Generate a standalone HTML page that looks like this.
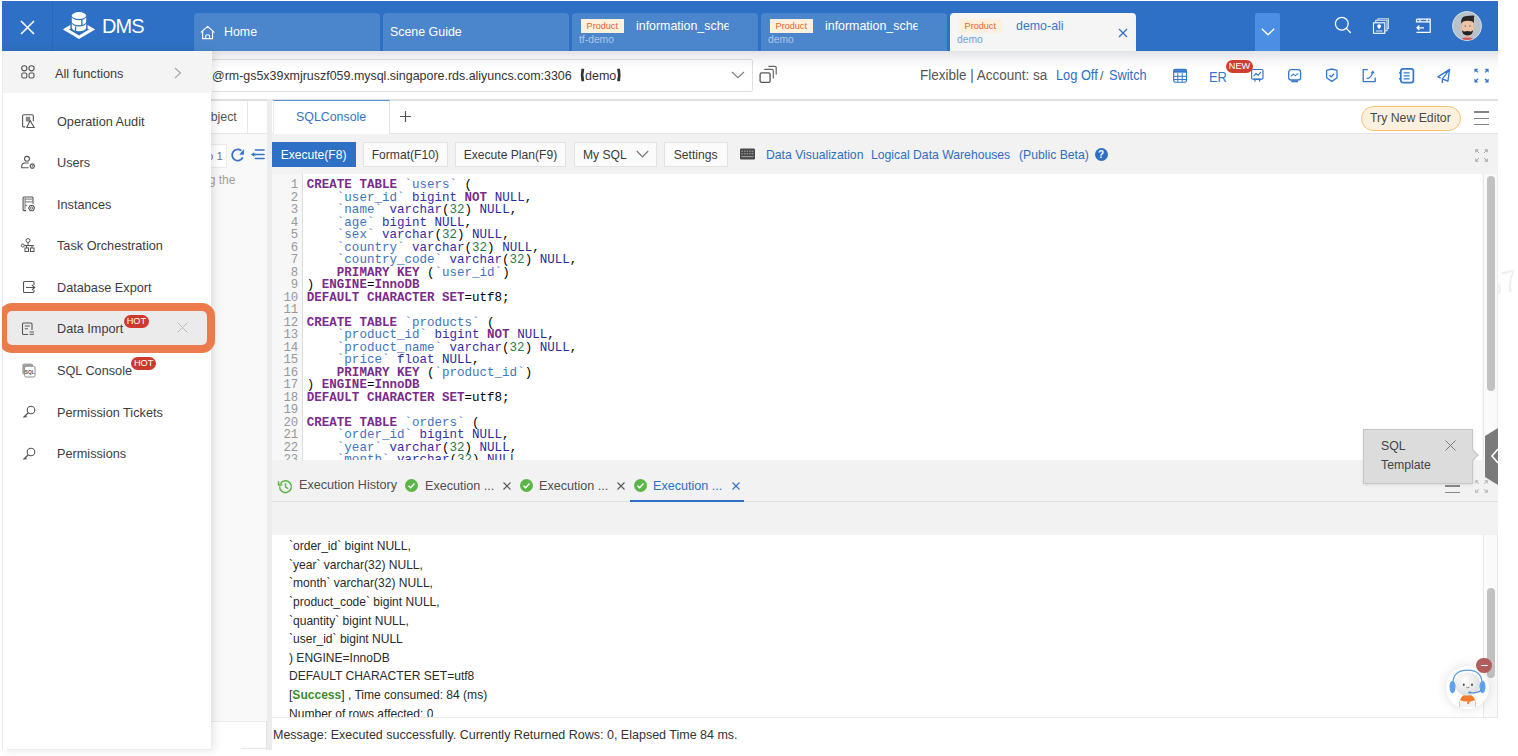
<!DOCTYPE html>
<html><head><meta charset="utf-8">
<style>
*{box-sizing:border-box;margin:0;padding:0}
html,body{width:1518px;height:756px;overflow:hidden;background:#fff;font-family:"Liberation Sans",sans-serif;color:#333;position:relative}
.a{position:absolute}
.t{position:absolute;white-space:nowrap;line-height:1}
svg{position:absolute;overflow:visible}
/* header */
#hdr{position:absolute;left:2px;top:1px;width:1496px;height:50px;background:#2e70c5}
.htab{position:absolute;top:12px;height:38px;width:186px;background:#4b86cd;border-radius:4px 4px 0 0;overflow:hidden}
.badge{position:absolute;top:5.5px;height:14.7px;width:42.5px;background:#fdf0dc;color:#e8652e;font-size:9.1px;line-height:14.7px;text-align:center}
.htitle{position:absolute;top:8px;font-size:13.4px;color:#fff;line-height:15px;white-space:nowrap;margin-top:-1.1px;transform:scaleX(.926);transform-origin:0 0}
.hsub{position:absolute;top:22px;font-size:10.3px;color:rgba(255,255,255,.55);line-height:1}
/* connection bar */
#conn{position:absolute;left:2px;top:51px;width:1496px;height:49px;background:#fff}
#conn .shadow{display:none}
.ci{position:absolute;top:68px;width:16px;height:16px}
/* main */
#main{position:absolute;left:2px;top:100.5px;width:1496px;height:649.5px;background:#f9f9f9}
.btn{position:absolute;top:142px;height:25px;background:#fbfbfb;border:1px solid #e2e2e2;font-size:13.07px;color:#3a3a3a;line-height:24px;text-align:center;border-radius:0}
/* code */
.code{position:absolute;left:306.8px;top:179.3px;font-family:"Liberation Mono",monospace;font-size:12.53px;line-height:12.5px;white-space:pre;color:#000}
.ln{position:absolute;left:272px;width:26.3px;top:179.3px;font-family:"Liberation Mono",monospace;font-size:12.4px;line-height:12.5px;white-space:pre;color:#999;text-align:right}
.k{color:#7a2b8c;font-weight:bold}
.v{color:#3f74bd}
.b{color:#3a2ea6}
.n{color:#28299c}
.num{color:#2b7a4b}
/* sidebar */
#side{position:absolute;left:2px;top:50.5px;width:209px;height:699.5px;background:#fff;box-shadow:3px 0 9px rgba(0,0,0,.11)}
.mi{position:absolute;left:0;width:209px;height:41px}
.mi .lbl{position:absolute;left:55.5px;top:14px;font-size:12.4px;color:#333;line-height:1;white-space:nowrap}
.hot{position:absolute;height:13px;width:25.3px;background:#cd3a2c;border-radius:6.5px;color:#fff;font-size:9.2px;line-height:13px;text-align:center}
/* results */
.res{position:absolute;left:289px;margin-top:0.2px;font-size:13.1px;color:#2a2a2a;line-height:1;white-space:nowrap;transform:scaleX(.92);transform-origin:0 0}
</style></head><body>

<!-- HEADER -->
<div id="hdr">
  <div class="a" style="left:50px;top:0;width:1px;height:50px;background:#2a67bb"></div>
  <!-- close X -->
  <svg style="left:18px;top:18.5px" width="15" height="15" viewBox="0 0 15 15"><path d="M1 1L14 14M14 1L1 14" stroke="#fff" stroke-width="1.6"/></svg>
  <!-- logo -->
  <svg style="left:59px;top:10px" width="36" height="30" viewBox="0 0 36 30">
    <path d="M4.9 18.4L18 10.6L31.1 18.4L18 26.2Z" fill="none" stroke="#fff" stroke-width="3"/>
    <path d="M9.4 4.6V16.8A8.6 4.8 0 0 0 26.6 16.8V4.6Z" fill="#2e70c5"/>
    <ellipse cx="18" cy="4.6" rx="7.2" ry="3.5" fill="#fff"/>
    <path d="M10.8 5.8A7.2 3.5 0 0 0 25.2 5.8V10.8A7.2 3.5 0 0 1 10.8 10.8Z" fill="#fff"/>
    <path d="M10.8 12A7.2 3.5 0 0 0 25.2 12V16.8A7.2 3.5 0 0 1 10.8 16.8Z" fill="#fff"/>
    <path d="M20.9 9V14.5M14.6 15.5V21" stroke="#2e70c5" stroke-width="1.3"/>
  </svg>
  <div class="t" style="left:100px;top:14.8px;font-size:20px;letter-spacing:-0.9px;color:#fff">DMS</div>

  <!-- tabs -->
  <div class="htab" style="left:192px">
    <svg style="left:6px;top:12px" width="16" height="16" viewBox="0 0 16 16"><path d="M1.2 7.2L7.6 1.4L14 7.2M2.6 6V13.6H12.6V6M5.6 13.6V11Q5.6 9.8 7.6 9.8Q9.6 9.8 9.6 11V13.6" fill="none" stroke="#fff" stroke-width="1.1" stroke-linejoin="round" stroke-linecap="round"/></svg>
    <div class="htitle" style="left:29.5px;top:12px">Home</div>
  </div>
  <div class="htab" style="left:381px">
    <div class="htitle" style="left:6.5px;top:12px">Scene Guide</div>
  </div>
  <div class="htab" style="left:570px">
    <div class="badge" style="left:9px">Product</div>
    <div class="htitle" style="left:64px;top:6px;width:100.4px;overflow:hidden">information_schema</div>
    <div class="hsub" style="left:7px">tf-demo</div>
  </div>
  <div class="htab" style="left:759px">
    <div class="badge" style="left:9px">Product</div>
    <div class="htitle" style="left:64px;top:6px;width:100.4px;overflow:hidden">information_schema</div>
    <div class="hsub" style="left:7px">demo</div>
  </div>
  <div class="htab" style="left:948px;background:#f5f5f5">
    <div class="badge" style="left:9px">Product</div>
    <div class="htitle" style="left:65.5px;top:6px;color:#3a78c9">demo-ali</div>
    <div class="hsub" style="left:7px;color:#6b9fd9">demo</div>
    <svg style="left:168px;top:14.7px" width="10" height="10" viewBox="0 0 10 10"><path d="M1 1L9 9M9 1L1 9" stroke="#2e6fc4" stroke-width="1.2"/></svg>
  </div>
  <div class="a" style="left:1253px;top:12px;width:25px;height:38.5px;background:#4a8fe3;border-radius:2px 2px 0 0">
    <svg style="left:5.5px;top:14.5px" width="14" height="8" viewBox="0 0 14 8"><path d="M0.8 0.8L7 6.8L13.2 0.8" fill="none" stroke="#fff" stroke-width="1.4"/></svg>
  </div>
  <!-- right icons -->
  <svg style="left:1331px;top:14px" width="20" height="20" viewBox="0 0 20 20"><circle cx="8.8" cy="8.8" r="6.4" fill="none" stroke="#fff" stroke-width="1.3"/><path d="M13.3 13.3L17.4 17.4" stroke="#fff" stroke-width="1.4" stroke-linecap="round"/></svg>
  <svg style="left:1369px;top:15px" width="20" height="20" viewBox="0 0 20 20">
    <path d="M7 4.3V2.8H17.5V12.5H16" fill="none" stroke="rgba(255,255,255,.75)" stroke-width="1.1"/>
    <path d="M4.8 6.8V4.3H16V14.8H13.8" fill="none" stroke="rgba(255,255,255,.85)" stroke-width="1.1"/>
    <rect x="2.5" y="6.8" width="11.3" height="10.5" fill="none" stroke="#fff" stroke-width="1.1"/>
    <path d="M8.1 13.2L6.5 11.2A1.9 1.9 0 1 1 9.7 11.2Z" fill="#fff"/>
    <path d="M4.8 15H11.4" stroke="rgba(255,255,255,.8)" stroke-width="1.1"/>
  </svg>
  <svg style="left:1412px;top:15px" width="20" height="20" viewBox="0 0 20 20">
    <path d="M2.5 3.2H16.2V16.3H2.5M2.5 3.2V6.5M2.5 5.8H16.2M6 3.2V5.8M13 3.2V5.8" fill="none" stroke="#fff" stroke-width="1.2"/>
    <path d="M3 11.8H10M5.4 9.6L3 11.8L5.4 14" fill="none" stroke="#fff" stroke-width="1.3"/>
  </svg>
  <!-- avatar -->
  <div class="a" style="left:1449.5px;top:10px;width:30px;height:30px;border-radius:50%;background:#b8c2ca;border:1.4px solid #d3dde6;overflow:hidden">
    <svg style="left:-2.8px;top:-1.4px" width="30" height="30" viewBox="0 0 30 30">
      <path d="M10.5 30Q11.5 26.3 17.5 26.3Q23.5 26.3 24.5 30Z" fill="#d9545a"/>
      <rect x="15.4" y="21" width="4.2" height="5.6" fill="#e3b596"/>
      <ellipse cx="11.3" cy="16.4" rx="1.1" ry="1.4" fill="#e8b898"/>
      <ellipse cx="23.7" cy="16.4" rx="1.1" ry="1.4" fill="#e8b898"/>
      <path d="M11.6 11Q11.6 8.8 13.6 8.8H21.4Q23.4 8.8 23.4 11V18Q23.4 22.4 17.5 22.8Q11.6 22.4 11.6 18Z" fill="#eec3a3"/>
      <path d="M11.2 12.8Q10.6 6.2 15 5.3Q19 4.6 23.2 4.4Q25 4.6 23.9 6.6Q24.2 9.2 23.7 12.2Q22.6 9.6 17.2 9.8Q12.6 10 11.2 12.8Z" fill="#262626"/>
      <ellipse cx="15.3" cy="15" rx=".8" ry="1" fill="#9b8373"/>
      <ellipse cx="19.9" cy="15" rx=".8" ry="1" fill="#9b8373"/>
      <path d="M11.9 19Q12 24.3 17.5 24.4Q23 24.3 23.1 19Q22.2 20.6 20.6 20.4Q17.5 19.6 14.4 20.4Q12.8 20.6 11.9 19Z" fill="#222"/>
    </svg>
  </div>
</div>

<!-- CONNECTION BAR -->
<div id="conn"><div class="shadow"></div>
  <div class="a" style="left:0;top:48px;width:1496px;height:2px;background:#dfdfdf"></div>
</div>
<div class="a" style="left:150px;top:59px;width:603px;height:33px;border:1px solid #e0e0e0;border-radius:2px;background:#fff"></div>
<div class="t" style="left:212px;top:68.7px;font-size:13.1px;color:#333;transform:scaleX(.95);transform-origin:0 0">@rm-gs5x39xmjruszf059.mysql.singapore.rds.aliyuncs.com:3306</div>
<svg style="left:579px;top:67px" width="8" height="16" viewBox="0 0 8 16"><path d="M5.2 1.7H2.4Q1.2 8 2.4 14.3H5.2V13.6Q3.6 8 5.2 2.4Z" fill="#333"/></svg>
<div class="t" style="left:585px;top:68.7px;font-size:13.1px;color:#333;transform:scaleX(.955);transform-origin:0 0">demo</div>
<svg style="left:615px;top:67px" width="8" height="16" viewBox="0 0 8 16"><path d="M2.2 1.7H5Q6.2 8 5 14.3H2.2V13.6Q3.8 8 2.2 2.4Z" fill="#333"/></svg>
<svg style="left:730.5px;top:71px" width="14" height="8" viewBox="0 0 14 8"><path d="M1 1L7 6.6L13 1" fill="none" stroke="#808080" stroke-width="1.2"/></svg>
<svg style="left:759px;top:66px" width="19" height="18" viewBox="0 0 19 18"><rect x="1.1" y="6.9" width="10" height="9.4" rx="1.6" fill="none" stroke="#555" stroke-width="1.3"/><path d="M5.2 3.4H13Q14.3 3.4 14.3 4.7V12.5" fill="none" stroke="#666" stroke-width="1.2"/><path d="M9.4 0.4H16Q17.2 0.4 17.2 1.6V8.4" fill="none" stroke="#666" stroke-width="1.2"/></svg>
<div class="t" style="left:919.5px;top:67.59px;font-size:14.58px;color:#555;transform:scaleX(.926);transform-origin:0 0">Flexible | Account: sa</div>
<div class="t" style="left:1056px;top:68.63px;font-size:13.82px;color:#2e6fc4;transform:scaleX(.926);transform-origin:0 0">Log Off</div>
<div class="t" style="left:1100px;top:68.7px;font-size:13.4px;color:#555;transform:scaleX(.926);transform-origin:0 0">/</div>
<div class="t" style="left:1109px;top:68.63px;font-size:13.82px;color:#2e6fc4;transform:scaleX(.926);transform-origin:0 0">Switch</div>
<div class="a" style="left:2px;top:51px;width:1496px;height:18px;background:linear-gradient(rgba(30,40,70,.13),rgba(30,40,70,.04) 55%,rgba(30,40,70,0))"></div>
<!-- toolbar icons -->
<svg style="left:1171px;top:67px" width="18" height="17" viewBox="0 0 18 17"><rect x="2.7" y="2.3" width="12.8" height="12.9" rx="1.6" fill="none" stroke="#3477cc" stroke-width="1.15"/><path d="M2.7 4.4H15.5" stroke="#3477cc" stroke-width="2.6"/><path d="M2.7 9.3H15.5M2.7 12.5H15.5M6.8 6V15M11.2 6V15" stroke="#3477cc" stroke-width="1"/></svg>
<div class="t" style="left:1209px;top:68.5px;font-size:15px;color:#3477cc;transform:scaleX(.86);transform-origin:0 0">ER</div>
<div class="a" style="left:1226px;top:59.7px;width:27px;height:13.2px;background:#cf3f31;border-radius:7px;color:#fff;font-size:9.2px;line-height:13.2px;text-align:center">NEW</div>
<svg style="left:1249px;top:67px" width="16" height="17" viewBox="0 0 16 17"><rect x="2.6" y="2.5" width="11.4" height="9.6" rx="1.2" fill="none" stroke="#3477cc" stroke-width="1.2"/><path d="M4.6 9.2L7 6.6L9.2 8.2L11.8 5.2" fill="none" stroke="#3477cc" stroke-width="1.1"/><path d="M6.3 12.2L5.8 14.6M10.3 12.2L10.8 14.6M4.8 12.4H11.8" fill="none" stroke="#3477cc" stroke-width="1.2"/></svg>
<svg style="left:1286px;top:67px" width="17" height="17" viewBox="0 0 17 17"><rect x="2.7" y="2.6" width="11.9" height="10.4" rx="2.6" fill="none" stroke="#3477cc" stroke-width="1.3"/><path d="M4.9 9.3L7.3 7.2L9.4 8.6L12.2 6.3" fill="none" stroke="#3477cc" stroke-width="1.1"/><path d="M6 14.4H11.3" stroke="#3477cc" stroke-width="1.7" stroke-linecap="round"/></svg>
<svg style="left:1324px;top:67px" width="16" height="17" viewBox="0 0 16 17"><path d="M2.6 3.4L7.8 2L13 3.4V10.8L7.8 14.4L2.6 10.8Z" fill="none" stroke="#3477cc" stroke-width="1.3" stroke-linejoin="round"/><path d="M5.4 8.2L7.2 9.9L10.2 6.8" fill="none" stroke="#3477cc" stroke-width="1.3"/></svg>
<svg style="left:1361px;top:67px" width="17" height="17" viewBox="0 0 17 17"><path d="M6.8 2.6H2.2V14.6H14.2V10.6" fill="none" stroke="#3477cc" stroke-width="1.3" stroke-linejoin="round"/><path d="M5.6 11.6Q10.2 11.4 11.6 5.4" fill="none" stroke="#3477cc" stroke-width="1.3"/><path d="M9.6 6.2L12 3.2L13.6 6.6Z" fill="#3477cc"/></svg>
<svg style="left:1398px;top:67px" width="17" height="17" viewBox="0 0 17 17"><rect x="2.8" y="1.8" width="12.6" height="13.8" rx="2.2" fill="none" stroke="#3477cc" stroke-width="1.7"/><path d="M5.6 5.9H11.6M5.6 8.8H11.6M5.6 11.8H11.6" stroke="#3477cc" stroke-width="1.3"/><circle cx="2" cy="5.8" r="1" fill="#3477cc"/><circle cx="2" cy="11.8" r="1" fill="#3477cc"/></svg>
<svg style="left:1436px;top:67px" width="16" height="17" viewBox="0 0 16 17"><path d="M13.6 2.4L1.9 9.9L4.2 10.9M13.6 2.4L11.9 14.2L6.4 11.8M13.6 2.4L6.4 11.8L6.3 15.4" fill="none" stroke="#3477cc" stroke-width="1.3" stroke-linejoin="round" stroke-linecap="round"/></svg>
<svg style="left:1473px;top:67px" width="17" height="17" viewBox="0 0 17 17"><path d="M1.4 1.8H5.4L1.4 5.8Z M15.6 1.8H11.6L15.6 5.8Z M1.4 15.4H5.4L1.4 11.4Z M15.6 15.4H11.6L15.6 11.4Z" fill="#3477cc"/><path d="M2.5 2.9L5 5.4M14.5 2.9L12 5.4M2.5 14.3L5 11.8M14.5 14.3L12 11.8" stroke="#3477cc" stroke-width="1.3"/></svg>

<div class="t" style="left:1484px;top:268px;font-size:31px;color:rgba(0,0,0,.065);transform:rotate(-14deg)">57</div>
<!-- MAIN -->
<div id="main"></div>
<!-- left panel (mostly covered) -->
<div class="a" style="left:2px;top:100.5px;width:265px;height:33px;background:#fff;border-bottom:1px solid #e6e6e6"></div>
<div class="a" style="left:247px;top:101px;width:1px;height:32px;background:#e6e6e6"></div>
<div class="t" style="left:201px;top:109.66px;font-size:13.39px;color:#555;transform:scaleX(.926);transform-origin:0 0">Object</div>
<div class="a" style="left:150px;top:143.5px;width:77px;height:24px;background:#fff;border:1px solid #ebebeb"></div>
<div class="t" style="left:207.5px;top:150.5px;font-size:11.5px;color:#777">ɔ 1</div>
<svg style="left:229px;top:146px" width="18" height="18" viewBox="0 0 18 18"><path d="M13.8 11.4A5.6 5.6 0 1 1 12.3 4.7" fill="none" stroke="#3373c8" stroke-width="1.7"/><path d="M10.2 8.8L14.9 3.1V8.8Z" fill="#3373c8"/></svg>
<svg style="left:249px;top:148px" width="17" height="13" viewBox="0 0 17 13"><path d="M6.4 2.1H15.1M6.4 6.5H15.1M6.4 10.6H15.1" stroke="#3373c8" stroke-width="1.5" stroke-linecap="round"/><path d="M1.8 6.5L5.4 4.3V8.7Z" fill="#3373c8"/><path d="M4.5 6.5H7" stroke="#3373c8" stroke-width="1.5"/></svg>
<div class="t" style="left:202px;top:173.5px;font-size:12px;color:#a0a0a0">ng the</div>
<div class="a" style="left:267px;top:99px;width:5px;height:651px;background:#ececec"></div>
<!-- bottom-left white box -->
<div class="a" style="left:211px;top:720.5px;width:56px;height:29.5px;background:#fff;border-top:1px solid #ececec;border-right:1px solid #e3e3e3"></div>
<div class="a" style="left:241px;top:748px;width:25px;height:1px;background:#e6e6e6"></div>

<!-- right panel -->
<div class="a" style="left:272px;top:100.5px;width:1226px;height:33.5px;background:#fff;border-bottom:1px solid #e3e3e3"></div>
<div class="a" style="left:272.5px;top:100.2px;width:117.5px;height:34.5px;background:#fff;border-top:1.5px solid #5591d9;border-right:1px solid #e3e3e3;border-left:1px solid #ececec"></div>
<div class="t" style="left:296px;top:110.16px;font-size:13.39px;color:#3574c6;transform:scaleX(.926);transform-origin:0 0">SQLConsole</div>
<svg style="left:399.5px;top:111.3px" width="11" height="11" viewBox="0 0 11 11"><path d="M5.5 0V11M0 5.5H11" stroke="#555" stroke-width="1.2"/></svg>
<div class="a" style="left:1361px;top:106px;width:100px;height:24.5px;background:#fcf1de;border:1px solid #f2c46e;border-radius:12.5px"></div>
<div class="t" style="left:1370px;top:111.17px;font-size:13.28px;color:#4a4a4a;transform:scaleX(.926);transform-origin:0 0">Try New Editor</div>
<div class="a" style="left:1474px;top:111.3px;width:15px;height:1.3px;background:#858585"></div>
<div class="a" style="left:1474px;top:117.7px;width:15px;height:1.3px;background:#858585"></div>
<div class="a" style="left:1474px;top:124px;width:15px;height:1.3px;background:#858585"></div>

<!-- editor toolbar -->
<div class="a" style="left:272px;top:134px;width:1226px;height:39.5px;background:#f2f2f2"></div>
<div class="btn" style="left:272px;width:84px;background:#2e70c5;border-color:#2e70c5;color:#fff"><span style="display:inline-block;transform:scaleX(.926)">Execute(F8)</span></div>
<div class="btn" style="left:363px;width:85px"><span style="display:inline-block;transform:scaleX(.926)">Format(F10)</span></div>
<div class="btn" style="left:455px;width:111px"><span style="display:inline-block;transform:scaleX(.926)">Execute Plan(F9)</span></div>
<div class="btn" style="left:574px;width:83px;text-align:left;padding-left:8px"><span style="display:inline-block;transform:scaleX(.926);transform-origin:0 50%">My SQL</span></div>
<svg style="left:635.5px;top:150px" width="13" height="9" viewBox="0 0 13 9"><path d="M0.8 1L6.5 7L12.2 1" fill="none" stroke="#777" stroke-width="1.15"/></svg>
<div class="btn" style="left:664px;width:64px"><span style="display:inline-block;transform:scaleX(.926)">Settings</span></div>
<svg style="left:739px;top:147px" width="17" height="14" viewBox="0 0 17 14"><rect x="1" y="1.5" width="15" height="11" rx="1.2" fill="#4a4a4a"/><path d="M2.5 4.2H14.5M2.5 6.8H14.5M2.5 9.6H14.5" stroke="#bdbdbd" stroke-width=".8"/><path d="M4.5 3V8M7 3V8M9.5 3V8M12 3V8" stroke="#4a4a4a" stroke-width="1"/></svg>
<div class="t" style="left:766px;top:147.67px;font-size:13.18px;color:#2e6fc4;transform:scaleX(.926);transform-origin:0 0">Data Visualization</div>
<div class="t" style="left:871px;top:147.67px;font-size:13.18px;color:#2e6fc4;transform:scaleX(.926);transform-origin:0 0">Logical Data Warehouses</div>
<div class="t" style="left:1018.5px;top:147.67px;font-size:13.18px;color:#2e6fc4;transform:scaleX(.926);transform-origin:0 0">(Public Beta)</div>
<div class="a" style="left:1094.5px;top:148px;width:13px;height:13px;border-radius:50%;background:#2e6fc4;color:#fff;font-size:10px;font-weight:bold;line-height:13px;text-align:center">?</div>
<svg style="left:1474px;top:147.5px" width="15" height="15" viewBox="0 0 15 15"><path d="M1.2 1.2H4.8L1.2 4.8Z M13.8 1.2H10.2L13.8 4.8Z M1.2 13.8H4.8L1.2 10.2Z M13.8 13.8H10.2L13.8 10.2Z" fill="#a8a8a8"/><path d="M2 2L5 5M13 2L10 5M2 13L5 10M13 13L10 10" stroke="#a8a8a8" stroke-width="1"/></svg>

<!-- editor -->
<div class="a" style="left:272px;top:173.5px;width:1210px;height:287px;background:#fff"></div>
<div class="a" style="left:272px;top:173.5px;width:31px;height:287px;background:#f7f7f7;border-right:1px solid #ddd"></div>
<div class="a" style="left:1482.5px;top:173.5px;width:15px;height:287px;background:#fafafa;border-left:1px solid #e8e8e8;border-right:1px solid #ececec"></div>
<div class="a" style="left:1486.5px;top:176px;width:8.5px;height:215px;background:#c1c1c1;border-radius:4px"></div>
<div class="ln">1
2
3
4
5
6
7
8
9
10
11
12
13
14
15
16
17
18
19
20
21
22
23</div>
<div class="code"><span class="k">CREATE</span> <span class="k">TABLE</span> <span class="v">`users`</span> (
    <span class="v">`user_id`</span> <span class="b">bigint</span> <span class="k">NOT</span> <span class="n">NULL</span>,
    <span class="v">`name`</span> <span class="b">varchar</span>(<span class="num">32</span>) <span class="n">NULL</span>,
    <span class="v">`age`</span> <span class="b">bigint</span> <span class="n">NULL</span>,
    <span class="v">`sex`</span> <span class="b">varchar</span>(<span class="num">32</span>) <span class="n">NULL</span>,
    <span class="v">`country`</span> <span class="b">varchar</span>(<span class="num">32</span>) <span class="n">NULL</span>,
    <span class="v">`country_code`</span> <span class="b">varchar</span>(<span class="num">32</span>) <span class="n">NULL</span>,
    <span class="k">PRIMARY</span> <span class="k">KEY</span> (<span class="v">`user_id`</span>)
) <span class="k">ENGINE</span>=<span class="k">InnoDB</span>
<span class="k">DEFAULT</span> <span class="k">CHARACTER</span> <span class="k">SET</span>=utf8;

<span class="k">CREATE</span> <span class="k">TABLE</span> <span class="v">`products`</span> (
    <span class="v">`product_id`</span> <span class="b">bigint</span> <span class="k">NOT</span> <span class="n">NULL</span>,
    <span class="v">`product_name`</span> <span class="b">varchar</span>(<span class="num">32</span>) <span class="n">NULL</span>,
    <span class="v">`price`</span> <span class="b">float</span> <span class="n">NULL</span>,
    <span class="k">PRIMARY</span> <span class="k">KEY</span> (<span class="v">`product_id`</span>)
) <span class="k">ENGINE</span>=<span class="k">InnoDB</span>
<span class="k">DEFAULT</span> <span class="k">CHARACTER</span> <span class="k">SET</span>=utf8;

<span class="k">CREATE</span> <span class="k">TABLE</span> <span class="v">`orders`</span> (
    <span class="v">`order_id`</span> <span class="b">bigint</span> <span class="n">NULL</span>,
    <span class="v">`year`</span> <span class="b">varchar</span>(<span class="num">32</span>) <span class="n">NULL</span>,
    <span class="v">`month`</span> <span class="b">varchar</span>(<span class="num">32</span>) <span class="n">NULL</span>,</div>

<!-- results tabs -->
<div class="a" style="left:272px;top:460px;width:1226px;height:41.5px;background:#f2f2f2;border-bottom:1px solid #e0e0e0"></div>
<svg style="left:277.5px;top:478.5px" width="15" height="15" viewBox="0 0 14 14"><path d="M2.2 4.5A5.5 5.5 0 1 1 1.5 7" fill="none" stroke="#5bb648" stroke-width="1.4"/><path d="M0.5 2V5.5H4" fill="none" stroke="#5bb648" stroke-width="1.4"/><path d="M7 4V7.5L9.5 9" fill="none" stroke="#5bb648" stroke-width="1.3"/></svg>
<div class="t" style="left:299px;top:478.15px;font-size:13.61px;color:#505050;transform:scaleX(.926);transform-origin:0 0">Execution History</div>
<div class="a" style="left:405px;top:479px;width:13px;height:13px;border-radius:50%;background:#5bb648"></div>
<svg style="left:405px;top:479px" width="13" height="13" viewBox="0 0 13 13"><path d="M3.5 6.8L5.6 8.8L9.5 4.6" fill="none" stroke="#fff" stroke-width="1.5"/></svg>
<div class="t" style="left:424.5px;top:478.65px;font-size:13.61px;color:#505050;transform:scaleX(.926);transform-origin:0 0">Execution ...</div>
<svg style="left:502.5px;top:482px" width="8" height="8" viewBox="0 0 8 8"><path d="M0.5 0.5L7.5 7.5M7.5 0.5L0.5 7.5" stroke="#555" stroke-width="1.1"/></svg>
<div class="a" style="left:519.5px;top:479px;width:13px;height:13px;border-radius:50%;background:#5bb648"></div>
<svg style="left:519.5px;top:479px" width="13" height="13" viewBox="0 0 13 13"><path d="M3.5 6.8L5.6 8.8L9.5 4.6" fill="none" stroke="#fff" stroke-width="1.5"/></svg>
<div class="t" style="left:538.5px;top:478.65px;font-size:13.61px;color:#505050;transform:scaleX(.926);transform-origin:0 0">Execution ...</div>
<svg style="left:617px;top:482px" width="8" height="8" viewBox="0 0 8 8"><path d="M0.5 0.5L7.5 7.5M7.5 0.5L0.5 7.5" stroke="#555" stroke-width="1.1"/></svg>
<div class="a" style="left:633.5px;top:479px;width:13px;height:13px;border-radius:50%;background:#5bb648"></div>
<svg style="left:633.5px;top:479px" width="13" height="13" viewBox="0 0 13 13"><path d="M3.5 6.8L5.6 8.8L9.5 4.6" fill="none" stroke="#fff" stroke-width="1.5"/></svg>
<div class="t" style="left:653px;top:478.65px;font-size:13.61px;color:#2e6fc4;transform:scaleX(.926);transform-origin:0 0">Execution ...</div>
<svg style="left:731.5px;top:482px" width="8" height="8" viewBox="0 0 8 8"><path d="M0.5 0.5L7.5 7.5M7.5 0.5L0.5 7.5" stroke="#2e6fc4" stroke-width="1.1"/></svg>
<div class="a" style="left:630px;top:500px;width:114px;height:2px;background:#2e70c5"></div>
<div class="a" style="left:1445px;top:485px;width:14.5px;height:1.5px;background:#888"></div>
<div class="a" style="left:1445px;top:491.5px;width:14.5px;height:1.5px;background:#888"></div>
<svg style="left:1474px;top:478.5px" width="15" height="15" viewBox="0 0 15 15"><path d="M1.2 1.2H4.8L1.2 4.8Z M13.8 1.2H10.2L13.8 4.8Z M1.2 13.8H4.8L1.2 10.2Z M13.8 13.8H10.2L13.8 10.2Z" fill="#b5b5b5"/><path d="M2 2L5 5M13 2L10 5M2 13L5 10M13 13L10 10" stroke="#b5b5b5" stroke-width="1"/></svg>

<!-- results gray strip + content -->
<div class="a" style="left:272px;top:502px;width:1226px;height:33px;background:#f2f2f2"></div>
<div class="a" style="left:272px;top:535px;width:1226px;height:182px;background:#fff"></div>
<div class="a" style="left:1482.5px;top:535px;width:15px;height:182px;background:#fafafa;border-left:1px solid #e8e8e8;border-right:1px solid #e8e8e8"></div>
<div class="a" style="left:1486.5px;top:588px;width:8.5px;height:90px;background:#c1c1c1;border-radius:4px"></div>
<div class="res" style="top:539px">`order_id` bigint NULL,</div>
<div class="res" style="top:557.6px">`year` varchar(32) NULL,</div>
<div class="res" style="top:576.2px">`month` varchar(32) NULL,</div>
<div class="res" style="top:594.8px">`product_code` bigint NULL,</div>
<div class="res" style="top:613.4px">`quantity` bigint NULL,</div>
<div class="res" style="top:632px">`user_id` bigint NULL</div>
<div class="res" style="top:650.6px">) ENGINE=InnoDB</div>
<div class="res" style="top:669.2px">DEFAULT CHARACTER SET=utf8</div>
<div class="res" style="top:687.8px">[<b style="color:#3b8c2a">Success</b>] , Time consumed: 84 (ms)</div>
<div class="res" style="top:706.4px;height:10px;overflow:hidden;line-height:1">Number of rows affected: 0</div>
<!-- message bar -->
<div class="a" style="left:272px;top:717px;width:1226px;height:33px;background:#fff;border-top:1px solid #eaeaea"></div>
<div class="t" style="left:272.5px;top:727.65px;font-size:13.50px;color:#333;transform:scaleX(.926);transform-origin:0 0">Message: Executed successfully. Currently Returned Rows: 0, Elapsed Time 84 ms.</div>

<!-- SQL template popover -->
<div class="a" style="left:1363px;top:428.5px;width:109.5px;height:55px;background:#dcdcdc;border:1px solid #c6c6c6;box-shadow:0 1px 3px rgba(0,0,0,.1)"></div>
<div class="a" style="left:1469px;top:451px;width:8px;height:8px;background:#dcdcdc;transform:rotate(45deg);border-top:1px solid #c6c6c6;border-right:1px solid #c6c6c6"></div>
<div class="t" style="left:1381px;top:439.17px;font-size:13.28px;color:#444;transform:scaleX(.926);transform-origin:0 0">SQL</div>
<div class="t" style="left:1381px;top:458.17px;font-size:13.28px;color:#444;transform:scaleX(.926);transform-origin:0 0">Template</div>
<svg style="left:1445px;top:440px" width="11" height="11" viewBox="0 0 11 11"><path d="M0.5 0.5L10.5 10.5M10.5 0.5L0.5 10.5" stroke="#7a7a7a" stroke-width="1"/></svg>
<svg style="left:1485px;top:427.5px" width="13" height="57" viewBox="0 0 13 57"><path d="M13 0V57L0 49V8Z" fill="#7a7a7a"/><path d="M13 21L7 28L13 35" fill="none" stroke="#fff" stroke-width="1.6"/></svg>

<!-- help bot -->
<div class="a" style="left:1446px;top:666px;width:43.4px;height:43.4px;border-radius:50%;background:#fff;box-shadow:0 0 12px rgba(0,0,0,.13)"></div>
<svg style="left:1440px;top:650px" width="60" height="65" viewBox="0 0 60 65">
  <defs><radialGradient id="hg" cx=".4" cy=".35" r=".7"><stop offset="0" stop-color="#fff"/><stop offset="1" stop-color="#dcdcdc"/></radialGradient></defs>
  <path d="M12.9 35Q12.3 20.2 27.5 20.2Q42.7 20.2 42 35" fill="none" stroke="#5a9de8" stroke-width="1.3"/>
  <path d="M19 57Q19 44.5 27.5 44.5Q36 44.5 36 57Z" fill="#f07c2e"/>
  <path d="M19.5 50Q27.5 53 35.5 50V57H19.5Z" fill="#f3f3f3"/>
  <path d="M25.5 50.5Q25.5 48 27.8 48Q30 48 30 50Q30 51.5 28 52.5V54" fill="none" stroke="#f07c2e" stroke-width="1.6"/>
  <ellipse cx="27.5" cy="34" rx="12.6" ry="11.6" fill="url(#hg)"/>
  <ellipse cx="12.5" cy="37" rx="3" ry="6.2" fill="#5fa2ea"/>
  <ellipse cx="42.5" cy="37" rx="3" ry="6.2" fill="#5fa2ea"/>
  <ellipse cx="23.8" cy="34.8" rx=".9" ry="1.3" fill="#444"/>
  <ellipse cx="32" cy="34.8" rx=".9" ry="1.3" fill="#444"/>
  <path d="M26.3 37Q27.8 38.8 29.3 37" fill="none" stroke="#555" stroke-width=".7"/>
  <path d="M41.5 40Q38 43.2 30 42.6" fill="none" stroke="#4a90e2" stroke-width="1.1"/>
  <ellipse cx="29.8" cy="42.6" rx="1.6" ry="1" fill="#4a90e2"/>
</svg>
<div class="a" style="left:1476.2px;top:657.8px;width:15.4px;height:15.4px;border-radius:50%;background:#b35c5c"></div>
<div class="a" style="left:1480.5px;top:664.6px;width:7px;height:1.8px;background:#fff;border-radius:1px"></div>

<!-- SIDEBAR -->
<div id="side">
  <div class="a" style="left:1px;top:0;width:208.5px;height:42.5px;background:#f4f4f4"></div>
  <div class="a" style="left:0;top:0;width:1px;height:699px;background:#ebebeb"></div>
  <div class="a" style="left:5px;top:698.5px;width:204.5px;height:1px;background:#ebebeb"></div>
  <svg style="left:18.5px;top:14.5px" width="14" height="14" viewBox="0 0 14 14"><circle cx="3.3" cy="3.3" r="2.6" fill="none" stroke="#555" stroke-width="1.1"/><circle cx="10.5" cy="3.3" r="2.6" fill="none" stroke="#555" stroke-width="1.1"/><rect x="0.8" y="8" width="5" height="5" rx="1.5" fill="none" stroke="#555" stroke-width="1.1"/><rect x="8" y="8" width="5" height="5" rx="1.5" fill="none" stroke="#555" stroke-width="1.1"/></svg>
  <div class="t" style="left:53px;top:16.33px;font-size:13.4px;color:#3d3d3d;transform:scaleX(.948);transform-origin:0 0">All functions</div>
  <svg style="left:172px;top:16px" width="8" height="12" viewBox="0 0 8 12"><path d="M1 1L6.5 6L1 11" fill="none" stroke="#a5a5a5" stroke-width="1.1"/></svg>

  <!-- Operation Audit -->
  <svg style="left:19.5px;top:63px" width="15" height="15" viewBox="0 0 15 15"><path d="M3.1 12.9H1.6Q0.6 12.9 0.6 11.9V1.7Q0.6 0.7 1.6 0.7H10.3Q11.3 0.7 11.3 1.7V7.3" fill="none" stroke="#555" stroke-width="1.1"/><rect x="3.8" y="2.8" width="4.5" height="4.7" fill="#8a8a8a"/><path d="M8.1 6.6L12.3 13.5H4.7Z" fill="#fff" stroke="#555" stroke-width="1.1" stroke-linejoin="round"/></svg>
  <div class="t" style="left:55px;top:64.33px;font-size:13.4px;color:#3d3d3d;transform:scaleX(.948);transform-origin:0 0">Operation Audit</div>
  <!-- Users -->
  <svg style="left:19px;top:105px" width="16" height="14" viewBox="0 0 16 14"><circle cx="6" cy="2.8" r="2.45" fill="none" stroke="#555" stroke-width="1.1"/><path d="M7.6 7H4.2Q0.7 7.1 0.7 10.4V11.8H7.6" fill="none" stroke="#555" stroke-width="1.1"/><polygon points="13.60,10.10 12.45,12.09 10.15,12.09 9.00,10.10 10.15,8.11 12.45,8.11" fill="none" stroke="#555" stroke-width="1.1" stroke-linejoin="round"/><circle cx="11.3" cy="10.1" r=".75" fill="#555"/></svg>
  <div class="t" style="left:55px;top:105.83px;font-size:13.4px;color:#3d3d3d;transform:scaleX(.948);transform-origin:0 0">Users</div>
  <!-- Instances -->
  <svg style="left:20px;top:146px" width="15" height="15" viewBox="0 0 15 15"><path d="M4.2 13.6H2.1Q1.1 13.6 1.1 12.6V1Q1.1 0 2.1 0H10Q11 0 11 1V6.8" fill="none" stroke="#555" stroke-width="1.1"/><path d="M3 1V12.6M3 2.1H10.4M3 4.9H10.4M3 8.4H5.2" fill="none" stroke="#666" stroke-width=".9"/><polygon points="12.60,11.10 11.10,13.70 8.10,13.70 6.60,11.10 8.10,8.50 11.10,8.50" fill="#fff" stroke="#555" stroke-width="1.1" stroke-linejoin="round"/><circle cx="9.6" cy="11.1" r="1.2" fill="none" stroke="#555" stroke-width=".9"/></svg>
  <div class="t" style="left:55px;top:147.33px;font-size:13.4px;color:#3d3d3d;transform:scaleX(.948);transform-origin:0 0">Instances</div>
  <!-- Task Orchestration -->
  <svg style="left:19px;top:187.5px" width="16" height="15" viewBox="0 0 16 15"><circle cx="7" cy="2.5" r="2" fill="none" stroke="#555" stroke-width="1"/><circle cx="1.8" cy="7.5" r="1.5" fill="none" stroke="#555" stroke-width="1"/><path d="M7 4.5V7.5M3.3 7.5H13M5.5 7.5V10M11 7.5V10" stroke="#555" stroke-width="1"/><rect x="4" y="10" width="3.5" height="3.5" fill="none" stroke="#555" stroke-width="1"/><rect x="9.5" y="10" width="3.5" height="3.5" fill="none" stroke="#555" stroke-width="1"/></svg>
  <div class="t" style="left:55px;top:188.83px;font-size:13.4px;color:#3d3d3d;transform:scaleX(.948);transform-origin:0 0">Task Orchestration</div>
  <!-- Database Export -->
  <svg style="left:20px;top:229px" width="14" height="14" viewBox="0 0 14 14"><path d="M12 5V2.5Q12 1.5 11 1.5H2.5Q1.5 1.5 1.5 2.5V11.5Q1.5 12.5 2.5 12.5H11Q12 12.5 12 11.5V10" fill="none" stroke="#555" stroke-width="1.1"/><path d="M4 7.5H12.5M10 5L12.7 7.5L10 10" fill="none" stroke="#555" stroke-width="1.1"/></svg>
  <div class="t" style="left:55px;top:230.33px;font-size:13.4px;color:#3d3d3d;transform:scaleX(.948);transform-origin:0 0">Database Export</div>

  <!-- Data Import highlight -->
  <div class="a" style="left:-3px;top:252.5px;width:216px;height:50px;border:8px solid #ed7a4c;border-radius:13px;background:#ebebeb"></div>
  <svg style="left:18.7px;top:271px" width="14" height="14" viewBox="0 0 14 14"><path d="M7 12.5H2.5Q1.5 12.5 1.5 11.5V2Q1.5 1 2.5 1H10Q11 1 11 2V8" fill="none" stroke="#555" stroke-width="1.1"/><path d="M3.8 4H8.8M3.8 6.8H7" stroke="#555" stroke-width="1"/><path d="M8.5 10H13M8.5 12.3H13" stroke="#555" stroke-width="1"/></svg>
  <div class="t" style="left:55px;top:271.93px;font-size:13.4px;color:#3d3d3d;transform:scaleX(.948);transform-origin:0 0">Data Import</div>
  <div class="hot" style="left:121.7px;top:264.8px">HOT</div>
  <svg style="left:175px;top:271.6px" width="11" height="11" viewBox="0 0 11 11"><path d="M0.5 0.5L10.5 10.5M10.5 0.5L0.5 10.5" stroke="#bbb" stroke-width="1"/></svg>

  <!-- SQL Console -->
  <svg style="left:19.5px;top:313px" width="15" height="15" viewBox="0 0 15 15"><rect x="0.3" y="-0.6" width="10.8" height="11.2" rx="2.2" fill="#a3a3a3"/><rect x="2.6" y="2.2" width="10.4" height="10.8" rx="1.6" fill="#fff" stroke="#8a8a8a" stroke-width="1"/><text x="7.8" y="9.6" font-size="4.8" text-anchor="middle" fill="#555" font-family="Liberation Sans" font-weight="bold">SQL</text></svg>
  <div class="t" style="left:55px;top:313.43px;font-size:13.4px;color:#3d3d3d;transform:scaleX(.948);transform-origin:0 0">SQL Console</div>
  <div class="hot" style="left:129px;top:306.3px">HOT</div>
  <!-- Permission Tickets -->
  <svg style="left:19.5px;top:354px" width="14" height="14" viewBox="0 0 14 14"><circle cx="9" cy="5" r="3.8" fill="none" stroke="#555" stroke-width="1.1"/><path d="M6.3 7.8L1.5 12.5M3 11L4.5 12.3" fill="none" stroke="#555" stroke-width="1.3"/></svg>
  <div class="t" style="left:55px;top:355.03px;font-size:13.4px;color:#3d3d3d;transform:scaleX(.948);transform-origin:0 0">Permission Tickets</div>
  <!-- Permissions -->
  <svg style="left:19.5px;top:396px" width="14" height="14" viewBox="0 0 14 14"><circle cx="9" cy="5" r="3.8" fill="none" stroke="#555" stroke-width="1.1"/><path d="M6.3 7.8L1.5 12.5M3 11L4.5 12.3" fill="none" stroke="#555" stroke-width="1.3"/></svg>
  <div class="t" style="left:55px;top:396.53px;font-size:13.4px;color:#3d3d3d;transform:scaleX(.948);transform-origin:0 0">Permissions</div>
</div>


<div class="a" style="left:0;top:0;width:2px;height:756px;background:#fff"></div>
<div class="a" style="left:0;top:0;width:1518px;height:1px;background:#fff"></div>
</body></html>
